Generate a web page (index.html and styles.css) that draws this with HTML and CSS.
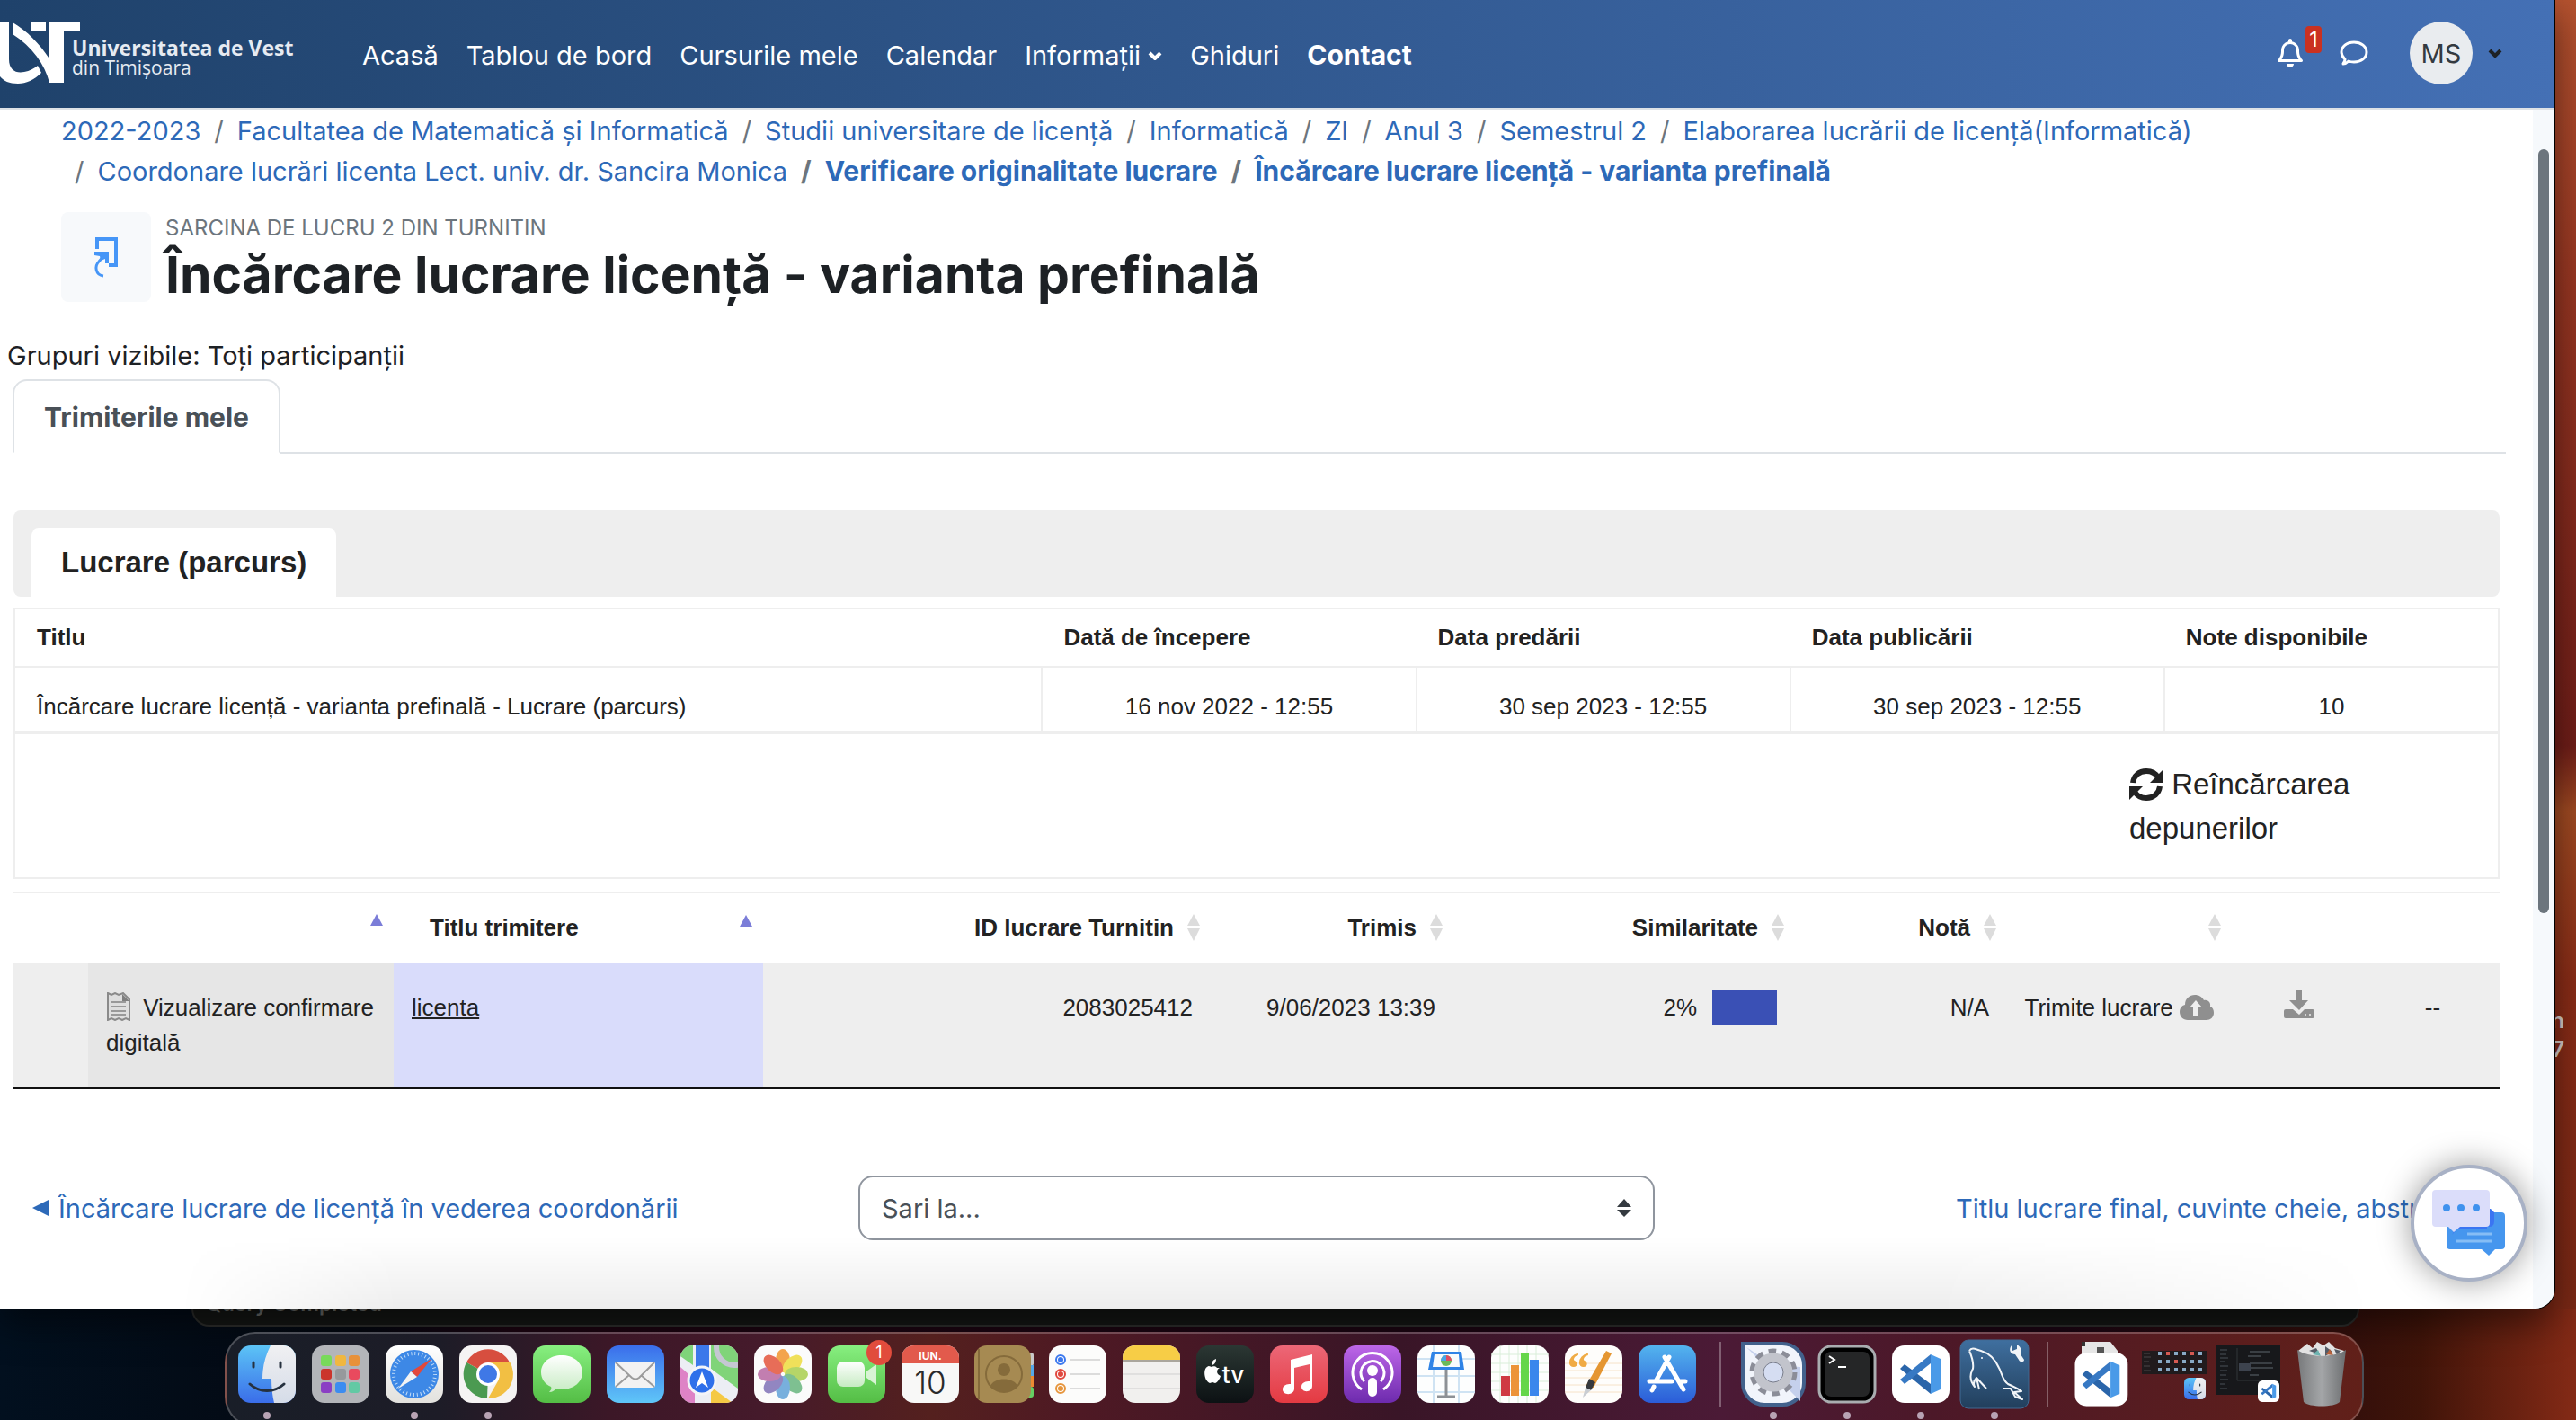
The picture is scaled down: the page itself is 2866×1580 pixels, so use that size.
FILE: index.html
```html
<!DOCTYPE html>
<html lang="ro">
<head>
<meta charset="utf-8">
<title>Încărcare lucrare licență - varianta prefinală</title>
<link rel="stylesheet" href="styles.css">
</head>
<body>
<svg class="defs" aria-hidden="true">
  <defs>
    <linearGradient id="g-finder" x2="0" y2="1"><stop stop-color="#5cc4f6"/><stop offset="1" stop-color="#3a6de9"/></linearGradient>
    <linearGradient id="g-pale" x2="0" y2="1"><stop stop-color="#f0f0f2"/><stop offset="1" stop-color="#d5dce8"/></linearGradient>
    <linearGradient id="g-green" x2="0" y2="1"><stop stop-color="#87ef80"/><stop offset="1" stop-color="#54bd45"/></linearGradient>
    <linearGradient id="g-mail" x2="0" y2="1"><stop stop-color="#3a6deb"/><stop offset="1" stop-color="#5fc6f8"/></linearGradient>
    <linearGradient id="g-white" x2="0" y2="1"><stop stop-color="#fff"/><stop offset="1" stop-color="#e2e1dd"/></linearGradient>
    <linearGradient id="g-bubble" x2="0" y2="1"><stop stop-color="#fff"/><stop offset="1" stop-color="#c6ebc2"/></linearGradient>
    <linearGradient id="g-tv" x2="0" y2="1"><stop stop-color="#2b3733"/><stop offset="1" stop-color="#0c1113"/></linearGradient>
    <linearGradient id="g-music" x2="0" y2="1"><stop stop-color="#ec6777"/><stop offset="1" stop-color="#e43a42"/></linearGradient>
    <linearGradient id="g-pod" x2="0" y2="1"><stop stop-color="#bd67e8"/><stop offset="1" stop-color="#6d2aad"/></linearGradient>
    <linearGradient id="g-store" x2="0" y2="1"><stop stop-color="#53b4ee"/><stop offset="1" stop-color="#2b5cd8"/></linearGradient>
    <linearGradient id="g-mysql" x2="0" y2="1"><stop stop-color="#3f6f9f"/><stop offset="1" stop-color="#223f5c"/></linearGradient>
    <linearGradient id="g-trash" x2="1" y2="0"><stop stop-color="#77797b"/><stop offset=".5" stop-color="#a4a6a8"/><stop offset="1" stop-color="#6c6e70"/></linearGradient>
    <clipPath id="tile"><rect width="64" height="64" rx="14"/></clipPath>
    <symbol id="sort" viewBox="0 0 16 32"><path d="M8 1l7 13H1zM8 31L1 17h14z" fill="#dcdcdc"/></symbol>
    <symbol id="sort-up" viewBox="0 0 16 32"><path d="M8 1l7 13H1z" fill="#7b7dd8"/></symbol>
    <symbol id="chevron" viewBox="0 0 16 10"><path d="M2 2l6 6 6-6" fill="none" stroke="currentColor" stroke-width="4"/></symbol>
    <symbol id="face" viewBox="0 0 64 64">
      <g clip-path="url(#tile)"><rect width="64" height="64" fill="url(#g-finder)"/><path d="M36 0C30 12 27 24 27 37h10c0 10 1 19 3 27h24V0z" fill="url(#g-pale)"/></g>
      <path d="M17 19v5M47 19v5M13 43c11 10 27 10 38 0" fill="none" stroke="#26313f" stroke-width="3" stroke-linecap="round"/>
    </symbol>
    <symbol id="code" viewBox="0 0 64 64">
      <rect width="64" height="64" rx="14" fill="#fff"/>
      <path d="M9 26l5-5 29 22v11z" fill="#2a65aa"/><path d="M9 38l5 5 29-23V10z" fill="#3779c4"/><path d="M43 10l11 5v34l-11 5z" fill="#4a9ae8"/>
    </symbol>
  </defs>
</svg>

<div class="desktop">
  <div class="desktop-label">n<br>7</div>
  <div class="back-window">Query Completed</div>

  <div class="window">
    <header class="site-header">
      <a class="brand" href="#">
        <svg class="brand-mark" viewBox="0 0 80 70"><g fill="#fff"><path d="M0 0h10v42c0 12 8 16 17 14 6-1 11-4 15-7l4 8c-8 8-17 12-26 12C10 69 4 66 0 61z"/><path d="M14 1c16 9 31 25 40 39V0h35v11H71v57H55C50 48 36 28 14 14z"/><path d="M34 0h17v11H34z"/></g></svg>
        <span class="brand-text"><strong>Universitatea de Vest</strong><span>din Timișoara</span></span>
      </a>
      <nav class="main-nav">
        <a href="#">Acasă</a>
        <a href="#">Tablou de bord</a>
        <a href="#">Cursurile mele</a>
        <a href="#">Calendar</a>
        <a href="#">Informații <svg class="chevron"><use href="#chevron"/></svg></a>
        <a href="#">Ghiduri</a>
        <a class="strong" href="#">Contact</a>
      </nav>
      <div class="user-nav">
        <button class="icon-button bell" aria-label="Notificări">
          <svg width="28" height="32" viewBox="0 0 448 512"><path fill="#fff" d="M224 0c-17.700 0-32 14.300-32 32V51.200C119 66 64 130.600 64 208v25.400c0 45.400-15.500 89.500-43.800 124.900L5.300 377c-5.800 7.200-6.900 17.100-2.900 25.400S14.800 416 24 416H424c9.200 0 17.600-5.300 21.600-13.600s2.900-18.200-2.900-25.400l-14.900-18.600C399.500 322.900 384 278.800 384 233.400V208c0-77.400-55-142-128-156.800V32c0-17.700-14.300-32-32-32zm0 96c61.900 0 112 50.100 112 112v25.400c0 47.900 13.900 94.600 39.700 134.600H72.300C98.100 328 112 281.300 112 233.400V208c0-61.900 50.100-112 112-112zm64 352H160c0 17 6.700 33.300 18.700 45.300s28.300 18.700 45.300 18.700s33.300-6.700 45.300-18.700s18.700-28.300 18.700-45.300z"/></svg>
          <span class="badge">1</span>
        </button>
        <button class="icon-button" aria-label="Mesaje">
          <svg width="32" height="30" viewBox="0 0 32 30"><path d="M16 3c8 0 14 4.500 14 11s-6 11-14 11c-2 0-4 0-6-1-2 2-4 3-6 3 1-2 2-3 2-5-2-2-4-5-4-8C2 7.500 8 3 16 3z" fill="none" stroke="#fff" stroke-width="3" stroke-linejoin="round"/></svg>
        </button>
        <button class="user-menu"><span class="avatar">MS</span><svg class="chevron"><use href="#chevron"/></svg></button>
      </div>
    </header>

    <div class="viewport">
      <main class="page">
        <ol class="breadcrumb">
          <li><a href="#">2022-2023</a></li>
          <li><a href="#">Facultatea de Matematică și Informatică</a></li>
          <li><a href="#">Studii universitare de licență</a></li>
          <li><a href="#">Informatică</a></li>
          <li><a href="#">ZI</a></li>
          <li><a href="#">Anul 3</a></li>
          <li><a href="#">Semestrul 2</a></li>
          <li><a href="#">Elaborarea lucrării de licență(Informatică)</a></li>
          <li><a href="#">Coordonare lucrări licenta Lect. univ. dr. Sancira Monica</a></li>
          <li class="strong"><a href="#">Verificare originalitate lucrare</a></li>
          <li class="strong"><a href="#">Încărcare lucrare licență - varianta prefinală</a></li>
        </ol>

        <div class="page-title">
          <span class="activity-icon"><svg width="28" height="46" viewBox="0 0 28 46" fill="none" stroke="#4696f7" stroke-width="4"><path d="M4 14V3h21v29h-8"/><path d="M11 44C2 43 1 33 6 28l6-7" stroke-width="3"/><path d="M1 17h16v13h-4v-5L8 27l-1-5-6-1z" fill="#4696f7" stroke="none"/></svg></span>
          <div>
            <div class="kind">Sarcina de lucru 2 din Turnitin</div>
            <h1>Încărcare lucrare licență - varianta prefinală</h1>
          </div>
        </div>

        <div class="groups">Grupuri vizibile: Toți participanții</div>

        <div class="tabs"><a class="tab strong" href="#">Trimiterile mele</a></div>

        <div class="tii">
          <div class="parts"><a class="part" href="#">Lucrare (parcurs)</a></div>

          <table class="assignment">
            <colgroup><col class="a-title"><col class="a-date"><col class="a-date"><col class="a-date"><col class="a-marks"></colgroup>
            <thead><tr><th>Titlu</th><th>Dată de începere</th><th>Data predării</th><th>Data publicării</th><th>Note disponibile</th></tr></thead>
            <tbody><tr><td>Încărcare lucrare licență - varianta prefinală - Lucrare (parcurs)</td><td>16 nov 2022 - 12:55</td><td>30 sep 2023 - 12:55</td><td>30 sep 2023 - 12:55</td><td>10</td></tr></tbody>
          </table>

          <div class="refresh-row">
            <a class="refresh" href="#"><svg width="38" height="38" viewBox="0 0 38 38"><g id="half"><path d="M4 17C5 9 11 4 19 4c6 0 10 2 13 7" fill="none" stroke="#222" stroke-width="6"/><path d="M38 2v15H23z" fill="#222"/></g><use href="#half" transform="rotate(180 19 19)"/></svg> Reîncărcarea depunerilor</a>
          </div>

          <table class="submissions">
            <colgroup><col class="s-gap"><col class="s-receipt"><col class="s-title"><col class="s-id"><col class="s-date"><col class="s-sim"><col class="s-mark"><col class="s-send"><col class="s-tool"><col class="s-tool"></colgroup>
            <thead><tr>
              <th colspan="2"><svg class="sort"><use href="#sort-up"/></svg></th>
              <th><span class="head-split">Titlu trimitere<svg class="sort"><use href="#sort-up"/></svg></span></th>
              <th>ID lucrare Turnitin<svg class="sort"><use href="#sort"/></svg></th>
              <th>Trimis<svg class="sort"><use href="#sort"/></svg></th>
              <th>Similaritate<svg class="sort"><use href="#sort"/></svg></th>
              <th>Notă<svg class="sort"><use href="#sort"/></svg></th>
              <th><svg class="sort"><use href="#sort"/></svg></th>
              <th colspan="2"></th>
            </tr></thead>
            <tbody><tr>
              <td></td>
              <td class="receipt"><svg class="doc" viewBox="0 0 28 32"><path d="M2 1l4 2 4-2 4 2 5-2 7 7v23l-4-2-4 2-4-2-4 2-4-2-4 2z" fill="#dedede" stroke="#8a8a8a" stroke-width="2"/><path d="M18 2v8h8z" fill="#7f7f7f"/><path d="M6 11h16M6 16h16M6 21h16M6 25h16" stroke="#999" stroke-width="2"/></svg> Vizualizare confirmare digitală</td>
              <td class="title"><a href="#">licenta</a></td>
              <td>2083025412</td>
              <td>9/06/2023 13:39</td>
              <td>2%<span class="similarity"></span></td>
              <td>N/A</td>
              <td class="send">Trimite lucrare <svg class="cloud" viewBox="0 0 38 28"><path d="M9 28C4 28 0 24 0 19c0-4 2-7 6-8C6 4 11 0 17 0c4 0 8 2 10 6 4-1 8 2 7 7 3 1 4 4 4 7 0 5-4 8-8 8z" fill="#8f8f8f"/><path d="M18 6l7 8h-4v9h-6v-9h-4z" fill="#eee"/></svg></td>
              <td class="tool"><svg width="34" height="32" viewBox="0 0 34 32"><path d="M13 0h7v11h7L17 22 6 11h7zM2 21h8l7 6 6-6h9q2 0 2 2v6q0 2-2 2H2q-2 0-2-2v-6q0-2 2-2z" fill="#8f8f8f"/><circle cx="24" cy="27" r="1" fill="#eee"/><circle cx="29" cy="27" r="1" fill="#eee"/></svg></td>
              <td class="tool">--</td>
            </tr></tbody>
          </table>
        </div>

        <div class="activity-nav">
          <a class="prev" href="#"><svg width="18" height="18" viewBox="0 0 18 18"><path d="M0 9L18 0v18z" fill="currentColor"/></svg>Încărcare lucrare de licență în vederea coordonării</a>
          <div class="jump">
            <select aria-label="Sari la"><option>Sari la...</option></select>
            <svg class="jump-arrows" width="18" height="22" viewBox="0 0 18 22"><path d="M9 1l8 9H1zM9 21l-8-8h16z" fill="#343a40"/></svg>
          </div>
          <a class="next" href="#">Titlu lucrare final, cuvinte cheie, abstract ►</a>
        </div>
      </main>
      <div class="scrollbar"><div class="thumb"></div></div>
    </div>

    <button class="chat" aria-label="Chat"><svg width="82" height="74" viewBox="0 0 82 74"><path d="M20 25h57q4 0 4 4v33q0 4-4 4H70l-7 7-8-7H20q-4 0-4-4V29q0-4 4-4z" fill="#4696ee"/><path d="M22 50l8-9h33q6 0 6-6V25l-4-4h-4v22H26z" fill="#3b75f2"/><path d="M4 0h56q4 0 4 4v33q0 4-4 4H31l-7 6-6-6H4q-4 0-4-4V4q0-4 4-4z" fill="#dbddfa"/><g fill="#3f92ee"><circle cx="16" cy="20" r="4"/><circle cx="32" cy="20" r="4"/><circle cx="49" cy="20" r="4"/></g><path d="M39 49h27M27 57h39" stroke="#86bdf5" stroke-width="3"/></svg></button>
  </div>

  <div class="dock-bar">
    <div class="dock">
      <button class="app running" aria-label="Finder"><svg width="64" height="64"><use href="#face"/></svg></button>
      <button class="app" aria-label="Launchpad"><svg width="64" height="64"><rect width="64" height="64" rx="14" fill="#b3b5b9"/><g><rect x="10" y="11" width="12" height="12" rx="3" fill="#78da5a"/><rect x="26" y="11" width="12" height="12" rx="3" fill="#f0b73f"/><rect x="41" y="11" width="12" height="12" rx="3" fill="#e8913a"/><rect x="10" y="26" width="12" height="12" rx="3" fill="#cb342c"/><rect x="26" y="26" width="12" height="12" rx="3" fill="#96999c"/><rect x="41" y="26" width="12" height="12" rx="3" fill="#e94a5e"/><rect x="10" y="41" width="12" height="12" rx="3" fill="#8b3fc4"/><rect x="26" y="41" width="12" height="12" rx="3" fill="#3c8cf0"/><rect x="41" y="41" width="12" height="12" rx="3" fill="#62c9a4"/></g></svg></button>
      <button class="app running" aria-label="Safari"><svg width="64" height="64"><rect width="64" height="64" rx="14" fill="url(#g-white)"/><circle cx="32" cy="32" r="27" fill="#3d88e6"/><circle cx="32" cy="32" r="23" fill="none" stroke="#c5def7" stroke-width="4" stroke-dasharray="1 3"/><path d="M51 15L28 29l7 6z" fill="#e2483c"/><path d="M14 48l14-19 7 6z" fill="#f3f3f3"/></svg></button>
      <button class="app running" aria-label="Chrome"><svg width="64" height="64"><rect width="64" height="64" rx="14" fill="#f5f3f3"/><path d="M32 32L8 19A27 27 0 0 1 56 19z" fill="#d74e3f"/><path d="M32 32L8 19a27 27 0 0 0 23 40z" fill="#4b9a51"/><path d="M32 18h24a27 27 0 0 1-24 41l12-21z" fill="#f2bf43"/><circle cx="32" cy="32" r="13" fill="#fff"/><circle cx="32" cy="32" r="10" fill="#3f78e6"/></svg></button>
      <button class="app" aria-label="Mesaje"><svg width="64" height="64"><rect width="64" height="64" rx="14" fill="url(#g-green)"/><path d="M32 11c13 0 23 8 23 19s-10 19-23 19l-6-1c-2 2-4 4-8 4 2-2 3-4 2-6C13 43 9 37 9 30c0-11 10-19 23-19z" fill="url(#g-bubble)"/></svg></button>
      <button class="app" aria-label="Mail"><svg width="64" height="64"><rect width="64" height="64" rx="14" fill="url(#g-mail)"/><rect x="9" y="18" width="45" height="29" rx="3" fill="#f2f2f2"/><path d="M10 19l18 17q4 3 8 0l17-17M10 46l15-13M53 46L38 33" fill="none" stroke="#9b9b9b" stroke-width="2"/></svg></button>
      <button class="app" aria-label="Hărți"><svg width="64" height="64"><g clip-path="url(#tile)"><rect width="64" height="64" fill="#eceef4"/><path d="M0 24l16 14v26H0z" fill="#de83c6"/><path d="M0 0h14v22L0 12z" fill="#7fd47a"/><path d="M34 0h30v48L34 26z" fill="#80d479"/><path d="M34 46l24 18H34z" fill="#f5c944"/><circle cx="60" cy="2" r="20" fill="none" stroke="#c5c7d2" stroke-width="6"/><path d="M17 0h15v40H17z" fill="#3c78ea"/></g><circle cx="24" cy="39" r="15" fill="#2f70ea" stroke="#f3f4f8" stroke-width="3"/><path d="M24 29l7 18-7-5-7 5z" fill="#fff"/></svg></button>
      <button class="app" aria-label="Poze"><svg width="64" height="64"><rect width="64" height="64" rx="14" fill="#fbfbfb"/><g opacity=".85"><ellipse cx="32" cy="17" rx="8" ry="13" fill="#f2962f"/><ellipse cx="32" cy="17" rx="8" ry="13" fill="#efdc3e" transform="rotate(45 32 32)"/><ellipse cx="32" cy="17" rx="8" ry="13" fill="#a9cf4f" transform="rotate(90 32 32)"/><ellipse cx="32" cy="17" rx="8" ry="13" fill="#69b67f" transform="rotate(135 32 32)"/><ellipse cx="32" cy="17" rx="8" ry="13" fill="#62a2d8" transform="rotate(180 32 32)"/><ellipse cx="32" cy="17" rx="8" ry="13" fill="#8072b8" transform="rotate(225 32 32)"/><ellipse cx="32" cy="17" rx="8" ry="13" fill="#b969a4" transform="rotate(270 32 32)"/><ellipse cx="32" cy="17" rx="8" ry="13" fill="#e4553c" transform="rotate(315 32 32)"/></g></svg></button>
      <button class="app" aria-label="FaceTime"><svg width="64" height="64"><rect width="64" height="64" rx="14" fill="url(#g-green)"/><rect x="10" y="18" width="31" height="28" rx="7" fill="url(#g-bubble)"/><path d="M43 29l11-8v23l-11-8z" fill="#d8f3d4"/></svg><span class="app-badge">1</span></button>
      <button class="app" aria-label="Calendar"><svg width="64" height="64"><g clip-path="url(#tile)"><rect width="64" height="64" fill="#f8f8f7"/><rect width="64" height="20" fill="#e25a4c"/></g><text x="32" y="16" class="cal-month">IUN.</text><text x="32" y="54" class="cal-day">10</text></svg></button>
      <button class="app" aria-label="Contacte"><svg width="66" height="64" viewBox="0 0 66 64"><rect x="50" y="8" width="16" height="15" rx="3" fill="#c9c9c9"/><rect x="50" y="22" width="16" height="12" fill="#54a8ea"/><rect x="50" y="34" width="16" height="12" fill="#ec8a32"/><rect x="50" y="46" width="16" height="12" rx="3" fill="#66cf62"/><rect width="63" height="64" rx="14" fill="#a68a52"/><g fill="none" stroke="#856b3b" stroke-width="2"><circle cx="33" cy="32" r="20"/><path d="M5 4v56"/></g><circle cx="33" cy="27" r="7" fill="#856b3b"/><path d="M18 45c4-10 26-10 30 0-8 9-22 9-30 0z" fill="#856b3b"/></svg></button>
      <button class="app" aria-label="Mementouri"><svg width="64" height="64"><rect width="64" height="64" rx="14" fill="#fcfcfb"/><path d="M24 16h33M24 32h33M24 48h33" stroke="#bcbcbc" stroke-width="1"/><g stroke-width="2" fill="#fff"><circle cx="13" cy="16" r="5" stroke="#3b78ee"/><circle cx="13" cy="32" r="5" stroke="#e1483e"/><circle cx="13" cy="48" r="5" stroke="#e6953c"/></g><circle cx="13" cy="16" r="3" fill="#3b78ee"/><circle cx="13" cy="32" r="3" fill="#e1483e"/><circle cx="13" cy="48" r="3" fill="#e6953c"/></svg></button>
      <button class="app" aria-label="Notițe"><svg width="64" height="64"><g clip-path="url(#tile)"><rect width="64" height="64" fill="#f1f0ee"/><rect width="64" height="16" fill="#f7cd46"/><path d="M0 17h64" stroke="#aaa69c" stroke-width="2"/><path d="M0 32h64M0 48h64" stroke="#cfcfcf"/></g></svg></button>
      <button class="app" aria-label="TV"><svg width="64" height="64"><rect width="64" height="64" rx="14" fill="url(#g-tv)"/><path d="M23 25c-3-3-5-1-6-1s-3-2-5 0c-5 3-3 16 3 18 1 0 2-1 3-1s2 1 3 1c3-1 5-5 6-8-5-2-5-7-1-9zM17 22c0-4 2-6 5-7 0 4-2 7-5 7z" fill="#fff"/><text x="41" y="42" class="tv">tv</text></svg></button>
      <button class="app" aria-label="Muzică"><svg width="64" height="64"><rect width="64" height="64" rx="14" fill="url(#g-music)"/><path d="M23 16l24-6v35c0 8-12 8-12 1 0-5 5-6 9-6V21l-17 4v23c0 8-13 8-13 1 0-5 5-6 9-6z" fill="#fff"/></svg></button>
      <button class="app" aria-label="Podcasturi"><svg width="64" height="64"><rect width="64" height="64" rx="14" fill="url(#g-pod)"/><g fill="none" stroke="#fff" stroke-width="3"><path d="M20 49a22 22 0 1 1 24 0"/><path d="M23 40a13 13 0 1 1 18 0"/></g><circle cx="32" cy="28" r="6" fill="#fff"/><rect x="27" y="36" width="10" height="21" rx="5" fill="#fff"/></svg></button>
      <button class="app" aria-label="Keynote"><svg width="64" height="64"><rect width="64" height="64" rx="14" fill="#fdfefe"/><path d="M0 15h64M0 34h64M0 52h64M18 0v64M46 0v64" stroke="#cfe3f3" stroke-width="2"/><path d="M16 7h33l3 20H12z" fill="#2f83e6"/><path d="M19 10h27l1 14H17z" fill="#f7fafc"/><circle cx="32" cy="17" r="6" fill="#6cba58"/><path d="M32 17v-6a6 6 0 0 1 6 6z" fill="#de4c62"/><path d="M32 17h-6a6 6 0 0 1 6-6z" fill="#4aa4e6"/><path d="M32 27v29M22 57h20" stroke="#8d9196" stroke-width="3"/></svg></button>
      <button class="app" aria-label="Numbers"><svg width="64" height="64"><rect width="64" height="64" rx="14" fill="#fdfefd"/><path d="M0 10h64M0 20h64M0 30h64M0 40h64M0 50h64M10 0v64M20 0v64M30 0v64M40 0v64M50 0v64" stroke="#d9eed9"/><path d="M11 34h10v22H11z" fill="#cf3a43"/><path d="M22 22h9v34h-9z" fill="#ec9438"/><path d="M33 9h9v47h-9z" fill="#65d64a"/><path d="M43 16h10v40H43z" fill="#3a87ec"/></svg></button>
      <button class="app" aria-label="Pages"><svg width="64" height="64"><rect width="64" height="64" rx="14" fill="#fefdfb"/><path d="M0 20h64M0 28h64M0 36h64M0 44h64M0 52h64" stroke="#f6e2c8"/><text x="15" y="42" class="quote">“</text><path d="M46 6l6 3-20 38-7 1-1-4z" fill="#e59632"/><path d="M27 37l7 4-5 9-6-3z" fill="#37393d"/><path d="M23 47l6 3-9 8z" fill="#c9cdd2"/></svg></button>
      <button class="app" aria-label="App Store"><svg width="64" height="64"><rect width="64" height="64" rx="14" fill="url(#g-store)"/><path d="M34 13L19 40M29 13l21 36M12 40h25M45 40h7M17 46l-2 4" stroke="#fff" stroke-width="5" stroke-linecap="round"/></svg></button>
      <span class="separator"></span>
      <button class="app running" aria-label="Utilitare"><svg width="72" height="72" viewBox="0 0 72 72"><path d="M2 2h44a24 24 0 0 1 24 24v20a24 24 0 0 1-24 24H26A24 24 0 0 1 2 46z" fill="#f1f4fb" stroke="#42618c" stroke-width="4"/><path d="M6 6l60 60V28L36 26z" fill="#c5d0ec"/><circle cx="36" cy="34" r="22" fill="none" stroke="#8b8d98" stroke-width="9" stroke-dasharray="8 6"/><circle cx="36" cy="34" r="16" fill="#dfe4f3" stroke="#c2c4cc" stroke-width="11"/><circle cx="36" cy="34" r="11" fill="#d5ddf2" stroke="#797e8c"/></svg></button>
      <button class="app running" aria-label="Terminal"><svg width="64" height="64"><rect x="1" y="1" width="62" height="62" rx="13" fill="#000" stroke="#a9adb0" stroke-width="3"/><rect x="7" y="7" width="50" height="50" rx="7" fill="#252627"/><path d="M12 12l6 4-6 4M22 24h9" fill="none" stroke="#fff" stroke-width="2"/></svg></button>
      <button class="app running" aria-label="Visual Studio Code"><svg width="64" height="64"><use href="#code"/></svg></button>
      <button class="app running" aria-label="MySQL Workbench"><svg width="76" height="76"><rect width="76" height="76" rx="9" fill="url(#g-mysql)" stroke="#416b93"/><g fill="none" stroke="#f2f5f8" stroke-width="2" stroke-linejoin="round"><path d="M10 12c3-5 8-1 13 0 10 3 16 10 20 19 4 8 4 14 10 18 6 3 12 5 15 8l-8 1 9 8-8-3-5-9-8 0M21 55l-3-13 11 12M18 42c-3 3-4 6-2 10-5-6-6-13-2-20 1-6-1-13-4-20"/></g><circle cx="24" cy="20" r="1" fill="#fff"/><path d="M57 6l1 6 5-2v-5c5 3 6 8 4 11l4 6c0 3-5 3-6 0l-4-6c-5 0-8-5-4-10z" fill="#f2f5f8"/></svg></button>
      <span class="separator"></span>
      <button class="app" aria-label="Document"><svg width="58" height="72" viewBox="0 0 58 72"><path d="M8 0h32l8 10v12H8z" fill="#e6e6e6"/><path d="M8 0h4v5H8z" fill="#333"/><path d="M25 6h8v8h-8z" fill="#555"/><rect x="1" y="14" width="56" height="57" rx="13" fill="#fff"/><svg x="4" y="16" width="50" height="52" viewBox="4 5 54 54"><use href="#code" width="64" height="64"/></svg></svg></button>
      <button class="app" aria-label="Fereastră Finder"><svg width="72" height="56" viewBox="0 0 72 56"><rect y="2" width="72" height="26" fill="#201b1d"/><path d="M2 5h7M2 9h8M2 14h6M2 19h7M2 24h8" stroke="#4a4648"/><path d="M18 5h50M18 14h50M18 23h50" stroke="#88a9c5" stroke-width="4" stroke-dasharray="4 5"/><path d="M27 5h4M36 14h4M54 5h4" stroke="#d65a52" stroke-width="4"/><svg x="47" y="32" width="24" height="24"><use href="#face"/></svg></svg></button>
      <button class="app" aria-label="Fereastră Visual Studio Code"><svg width="72" height="64" viewBox="0 0 72 64"><rect width="72" height="55" fill="#17181b"/><path d="M5 5h8M5 10h7M5 14h9M5 18h6M5 23h9M5 28h8M5 33h7M5 38h9M5 43h6M5 48h8" stroke="#4b5058"/><path d="M38 7h22M36 12h14M38 20h25M38 25h26M38 33h10" stroke="#5f666e"/><rect x="26" y="20" width="13" height="9" fill="#3d434e"/><path d="M24 3v36h46" fill="none" stroke="#33363b"/><svg x="47" y="39" width="24" height="24"><use href="#code"/></svg></svg></button>
      <button class="app" aria-label="Coș de gunoi"><svg width="56" height="72" viewBox="0 0 56 72"><path d="M2 10L12 2l6 5 5-7 7 4 6-4 7 7 10 3-3 10H6z" fill="#e2e2e2"/><path d="M14 10l8-3 4 7zM32 5l8 6-8 5zM42 8l7 2-4 5z" fill="#555c66"/><path d="M18 14l6-5 3 7z" fill="#6db3b0"/><path d="M33 14l4-6 4 7z" fill="#b5603a"/><path d="M1 9c12 9 42 9 54 0l-7 58c-6 6-34 6-40 0z" fill="url(#g-trash)"/></svg></button>
    </div>
  </div>
</div>
</body>
</html>
```
FILE: styles.css
```css
* { box-sizing: border-box; }

body {
  margin: 0;
  font-family: Inter, "Liberation Sans", sans-serif;
  font-size: 29px;
  line-height: 45px;
  color: #1d2125;
}

a { color: #2d69b8; text-decoration: none; }
button { border: 0; padding: 0; background: none; font: inherit; color: inherit; }
h1 { margin: 0; }
.defs { position: absolute; width: 0; height: 0; }
.strong { font-size: 30px; font-weight: 700; }

/* Desktop */
.desktop {
  position: relative;
  display: grid;
  grid-template-rows: 1fr 124px;
  grid-template-columns: 100%;
  height: 100vh;
  overflow: hidden;
  background:
    linear-gradient(#b5522f, #983622 22%, #6f1d18 57%, #a04a22 62%, #8a2c17 75%, #7a2815) right top / 24px calc(100% - 124px) no-repeat,
    linear-gradient(90deg, #02101f, #040810 14%, #1b0410 20%, #1b0613 80%, #330f0b 91%, #401409 94%, #842a16) left bottom / 100% 148px no-repeat,
    #7a2815;
}
.desktop-label {
  position: absolute;
  top: 1120px;
  right: 13px;
  font-size: 24px;
  font-weight: 600;
  line-height: 32px;
  text-align: right;
  color: #d9cfcb;
}
.back-window {
  position: absolute;
  left: 213px;
  right: 241px;
  bottom: 104px;
  height: 60px;
  padding: 13px 14px;
  border: 2px solid #2c2d2b;
  border-radius: 20px;
  background: #141614;
  color: #6b6d6b;
  font-size: 23px;
  font-weight: 600;
  line-height: 40px;
}

/* Browser window */
.window {
  position: relative;
  display: flex;
  flex-direction: column;
  min-height: 0;
  margin-right: 24px;
  overflow: hidden;
  border-bottom-right-radius: 22px;
  background: #fff;
  box-shadow: 0 0 0 1px #000, 0 16px 40px rgba(0, 0, 0, .5);
}
.window::after {
  content: "";
  position: absolute;
  left: 200px;
  right: 200px;
  bottom: 0;
  height: 80px;
  background: linear-gradient(transparent, rgba(0, 0, 0, .07));
  mask-image: linear-gradient(90deg, transparent, #000 10%, #000 80%, transparent);
  pointer-events: none;
}

.site-header {
  display: flex;
  align-items: center;
  flex: none;
  height: 122px;
  padding-right: 58px;
  padding-bottom: 2px;
  border-bottom: 2px solid #dee2e6;
  background: linear-gradient(90deg, #1f426b, #4470b5);
  color: #fff;
}
.brand { display: flex; width: 403px; color: #fff; }
.brand-mark { width: 80px; height: 70px; overflow: visible; }
.brand-text {
  display: flex;
  flex-direction: column;
  padding-top: 18px;
  font-family: "Open Sans", sans-serif;
  font-size: 21px;
  line-height: 22px;
  color: #e6ebf2;
}
.brand-text strong { font-size: 23px; }
.main-nav { display: flex; gap: 31px; padding-top: 5px; }
.main-nav a { color: #fff; }
.chevron { width: 16px; height: 10px; vertical-align: 5px; }
.user-nav { display: flex; align-items: center; margin-left: auto; }
.icon-button { display: flex; position: relative; margin-right: 41px; }
.icon-button + .icon-button { margin-right: 46px; }
.badge {
  position: absolute;
  left: 31px;
  top: -14px;
  width: 18px;
  height: 30px;
  border-radius: 4px;
  background: #ca3120;
  font-size: 23px;
  line-height: 30px;
  text-align: center;
}
.user-menu { display: flex; align-items: center; gap: 17px; color: #1d2125; }
.avatar {
  width: 70px;
  height: 70px;
  border-radius: 50%;
  background: #e9ecef;
  color: #343a40;
  line-height: 72px;
  text-align: center;
}

.viewport { display: flex; flex: 1; min-height: 0; }
.page { flex: 1; min-width: 0; padding: 1px 30px 0 8px; overflow: hidden; }
.scrollbar { flex: none; width: 24px; padding: 44px 6px 40px; background: #f6f9fc; }
.thumb { height: 68%; border-radius: 6px; background: #6c757d; }

/* Page head */
.breadcrumb {
  display: flex;
  flex-wrap: wrap;
  margin: 0;
  padding: 0 60px;
  list-style: none;
}
.breadcrumb li + li { padding-left: 15px; }
.breadcrumb li + li::before { content: "/"; padding-right: 15px; color: #6c757d; }

.page-title { display: flex; gap: 16px; margin: 21px 60px 32px; }
.activity-icon {
  display: grid;
  place-items: center;
  width: 100px;
  height: 100px;
  margin-top: 2px;
  border-radius: 8px;
  background: #f7f9fb;
}
.kind { padding-top: 2px; font-size: 24px; line-height: 36px; text-transform: uppercase; color: #6c757d; }
h1 { font-size: 57px; line-height: 68px; font-weight: 700; }

.groups { padding-top: 1px; }
.tabs { display: flex; margin: 4px 0 63px 6px; border-bottom: 2px solid #dee2e6; }
.tab {
  margin-bottom: -2px;
  padding: 18px 33px 16px;
  border: 2px solid #dee2e6;
  border-bottom-color: #fff;
  border-radius: 16px 16px 0 0;
  background: #fff;
  color: #495057;
}

/* Turnitin block */
.tii {
  margin: 0 7px;
  font-family: "Liberation Sans", Arial, sans-serif;
  font-size: 26px;
  line-height: 39px;
  color: #222;
}
.parts { display: flex; padding: 20px 20px 0; border-radius: 8px; background: #eee; }
.part {
  padding: 18px 33px 19px;
  border-radius: 8px 8px 0 0;
  background: #fff;
  color: #222;
  font-size: 33px;
  font-weight: 700;
}

table { width: 100%; border-collapse: collapse; table-layout: fixed; }
.assignment { margin-top: 12px; border: 2px solid #eee; border-bottom-width: 4px; }
.assignment th { padding: 12px 24px; text-align: left; }
.assignment td { padding: 24px 24px 7px; border: 2px solid #eee; text-align: center; }
.assignment td:first-child { text-align: left; }
.a-title { width: 1143px; }
.a-date { width: 416px; }
.a-marks { width: 372px; }

.refresh-row {
  display: flex;
  justify-content: flex-end;
  padding: 31px 110px 30px 0;
  border: 2px solid #eee;
  border-top: 0;
}
.refresh { width: 300px; color: #222; font-size: 33px; line-height: 49px; }
.refresh svg { vertical-align: -8px; }

.submissions { margin-top: 14px; border-top: 2px solid #eee; border-bottom: 2px solid #111; }
.submissions th { padding: 19px 11px 20px; text-align: right; line-height: 39px; }
.submissions td { padding: 30px 20px 22px; background: #eee; text-align: right; vertical-align: top; }
.submissions .receipt { height: 139px; background: #e6e6e6; text-align: left; }
.submissions .title { background: #d9dcfb; text-align: left; }
.submissions .tool { text-align: center; }
.submissions .send { padding-left: 0; white-space: nowrap; }
.title a { color: #222; text-decoration: underline; }
.head-split { display: flex; justify-content: space-between; align-items: center; padding-left: 29px; }
.sort { width: 16px; height: 32px; margin-left: 14px; vertical-align: -7px; }
.doc { width: 28px; height: 32px; margin-right: 6px; vertical-align: -6px; }
.cloud { width: 38px; height: 28px; vertical-align: -5px; }
.similarity {
  display: inline-block;
  width: 72px;
  height: 39px;
  margin-left: 17px;
  background: #3a50b5;
  vertical-align: -11px;
}
.s-gap { width: 83px; }
.s-receipt { width: 340px; }
.s-title { width: 411px; }
.s-id { width: 498px; }
.s-date { width: 270px; }
.s-sim { width: 380px; }
.s-mark { width: 236px; }
.s-send { width: 250px; }
.s-tool { width: 149px; }

/* Activity navigation */
.activity-nav {
  display: grid;
  grid-template-columns: 1fr 886px 1fr;
  align-items: center;
  margin: 96px 20px 0 20px;
  white-space: nowrap;
}
.prev { display: flex; align-items: center; gap: 11px; padding-left: 8px; }
.next { text-align: right; }
.jump { position: relative; }
.jump select {
  display: block;
  width: 100%;
  height: 72px;
  padding: 0 24px;
  appearance: none;
  border: 2px solid #8f959e;
  border-radius: 16px;
  background: #fff;
  color: #495057;
  font: inherit;
}
.jump-arrows { position: absolute; right: 25px; top: 25px; }

.chat {
  position: absolute;
  right: 30px;
  bottom: 30px;
  z-index: 1;
  display: grid;
  place-items: center;
  width: 130px;
  height: 130px;
  border: 4px solid #a8b1c5;
  border-radius: 50%;
  background: #fff;
  box-shadow: 0 0 36px rgba(0, 0, 0, .4);
}

/* Dock */
.dock-bar { position: relative; display: flex; justify-content: center; align-items: flex-start; padding: 26px 0 0 14px; }
.dock {
  display: flex;
  flex: none;
  height: 106px;
  padding: 3px 4px 0;
  border: 2px solid rgba(255, 255, 255, .22);
  border-radius: 34px;
  background: linear-gradient(90deg, #191e28, #1d1c27 10%, #3c1727 18%, #451a2b 25%, #54201e 33%, #4e1924 40%, #391527 55%, #4b1a36 70%, #4c1828 80%, #612019);
}
.app {
  position: relative;
  display: grid;
  grid-template-rows: 84px 8px;
  place-items: center;
  align-content: start;
  width: 82px;
}
.app svg { display: block; overflow: visible; }
.running::after { content: ""; width: 8px; height: 8px; border-radius: 50%; background: #b8a3b4; }
.separator { width: 2px; height: 72px; margin: 6px 17px; background: rgba(255, 255, 255, .3); }
.app-badge {
  position: absolute;
  right: 2px;
  top: 4px;
  width: 28px;
  height: 28px;
  border-radius: 50%;
  background: #e14c3c;
  color: #fff;
  font-size: 18px;
  line-height: 28px;
  text-align: center;
}
.cal-month, .cal-day, .tv, .quote { text-anchor: middle; font-family: Inter, sans-serif; }
.cal-month { font-size: 12px; font-weight: 700; fill: #fff; }
.cal-day { font-size: 35px; font-weight: 300; fill: #2a2a2a; }
.tv { font-size: 26px; font-weight: 500; fill: #fff; }
.quote { font-family: "Liberation Serif", serif; font-size: 50px; font-weight: 700; fill: #f0ab45; }
```
